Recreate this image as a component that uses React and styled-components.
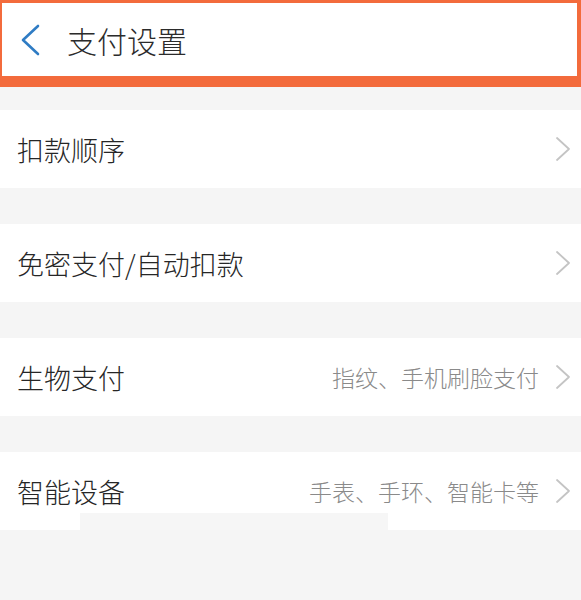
import React from 'react';
import styled, { createGlobalStyle } from 'styled-components';

const Global = createGlobalStyle`
  body {
    margin: 0;
    background: #f5f5f5;
    font-family: "Noto Sans CJK SC", "Noto Sans", sans-serif;
  }
`;

const Page = styled.div`
  width: 581px;
  height: 600px;
  background: #f5f5f5;
  display: flex;
  flex-direction: column;
  position: relative;
  overflow: hidden;
`;

const Header = styled.header`
  height: 73px;
  background: #fff;
  border-style: solid;
  border-color: #f36b3c;
  border-width: 3px 4px 11px 2px;
  display: flex;
  align-items: center;
  padding-left: 17px;
`;

const Back = styled.svg`
  width: 22px;
  height: 32px;
  flex-shrink: 0;
`;

const Title = styled.h1`
  margin: 0 0 0 26px;
  font-size: 30px;
  font-weight: 300;
  color: #2b2b2b;
`;

const List = styled.div`
  display: flex;
  flex-direction: column;
  gap: 36px;
  margin-top: 23px;
`;

const Row = styled.div`
  height: 78px;
  background: #fff;
  display: flex;
  align-items: center;
  padding: 0 10px 0 17px;
`;

const Label = styled.span`
  flex: 1;
  font-size: 27px;
  font-weight: 300;
  color: #262626;
`;

const Hint = styled.span`
  font-size: 23px;
  font-weight: 300;
  color: #8a8a8a;
  margin-right: 16px;
`;

const Chevron = styled.svg`
  width: 16px;
  height: 26px;
  flex-shrink: 0;
`;

const Patch = styled.div`
  position: absolute;
  left: 80px;
  top: 513px;
  width: 308px;
  height: 17px;
  background: #f6f6f6;
`;

const items = [
  { label: '扣款顺序' },
  { label: '免密支付/自动扣款' },
  { label: '生物支付', hint: '指纹、手机刷脸支付' },
  { label: '智能设备', hint: '手表、手环、智能卡等' },
];

export default function App() {
  return (
    <Page>
      <Global />
      <Header>
        <Back viewBox="0 0 22 32">
          <polyline points="19,2 4,16 19,30" fill="none" stroke="#2f7cc4" strokeWidth="2.6" strokeLinecap="round" strokeLinejoin="round" />
        </Back>
        <Title>支付设置</Title>
      </Header>
      <List>
        {items.map((it) => (
          <Row key={it.label}>
            <Label>{it.label}</Label>
            {it.hint && <Hint>{it.hint}</Hint>}
            <Chevron viewBox="0 0 16 26">
              <polyline points="2,2 14,13 2,24" fill="none" stroke="#c4c4c4" strokeWidth="1.8" strokeLinecap="round" strokeLinejoin="round" />
            </Chevron>
          </Row>
        ))}
      </List>
      <Patch />
    </Page>
  );
}
